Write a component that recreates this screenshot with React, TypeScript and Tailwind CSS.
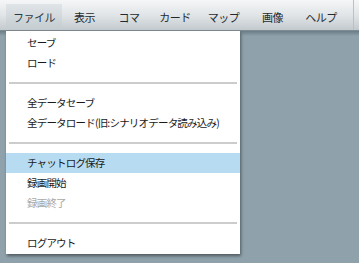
import React from "react";

const font = { fontFamily: '"Noto Sans CJK JP", "Noto Sans", sans-serif' };

function Item({ label, active, disabled }: { label: string; active?: boolean; disabled?: boolean }) {
  return (
    <div
      className={`h-[20px] flex items-center pl-[21px] text-[10.5px] tracking-[-0.8px] leading-none whitespace-nowrap ${
        active ? "bg-[#b7dcf2]" : ""
      } ${disabled ? "text-[#a8a8a8]" : "text-[#1a1a1a]"}`}
    >
      {label}
    </div>
  );
}

function Sep() {
  return (
    <div className="pt-[9px] pb-[9px] px-[3px]">
      <div className="h-[2px] bg-[#cccccc]" />
    </div>
  );
}

const menus: { label: string; w: string }[] = [
  { label: "表示", w: "w-[45px]" },
  { label: "コマ", w: "w-[44px]" },
  { label: "カード", w: "w-[48px]" },
  { label: "マップ", w: "w-[49px]" },
  { label: "画像", w: "w-[49px]" },
  { label: "ヘルプ", w: "w-[48px]" },
];

export default function App() {
  return (
    <div className="w-[359px] h-[263px] bg-[#8fa2ac] overflow-hidden relative" style={font}>
      <div className="h-[31px] flex bg-gradient-to-b from-[#f5f6f7] via-[#e1e5e7] to-[#c3cace] border-b border-[#7d8b92]">
        <div className="ml-[6px] w-[56px] mt-[4px] flex items-center justify-center text-[11px] tracking-[-0.5px] text-[#2a3a44] bg-gradient-to-b from-[#dfe4e7] to-[#c4ccd0] whitespace-nowrap">
          ファイル
        </div>
        {menus.map((m) => (
          <div
            key={m.label}
            className={`${m.w} flex items-center justify-center text-[11px] tracking-[-0.5px] text-[#1f2a30] pt-[4px] whitespace-nowrap`}
          >
            {m.label}
          </div>
        ))}
        <div className="ml-auto w-[6px] border-l border-[#b9c1c5]" />
      </div>
      <div className="h-[5px] bg-gradient-to-b from-[#6a7c85] to-[#8fa2ac]" />
      <div className="absolute left-[6px] top-[31px] w-[234px] bg-white shadow-[1px_2px_3px_rgba(0,0,0,0.45)] pt-[2px] pb-[1px]">
        <Item label="セーブ" />
        <Item label="ロード" />
        <Sep />
        <Item label="全データセーブ" />
        <Item label="全データロード(旧:シナリオデータ読み込み)" />
        <Sep />
        <Item label="チャットログ保存" active />
        <Item label="録画開始" />
        <Item label="録画終了" disabled />
        <Sep />
        <Item label="ログアウト" />
      </div>
    </div>
  );
}
